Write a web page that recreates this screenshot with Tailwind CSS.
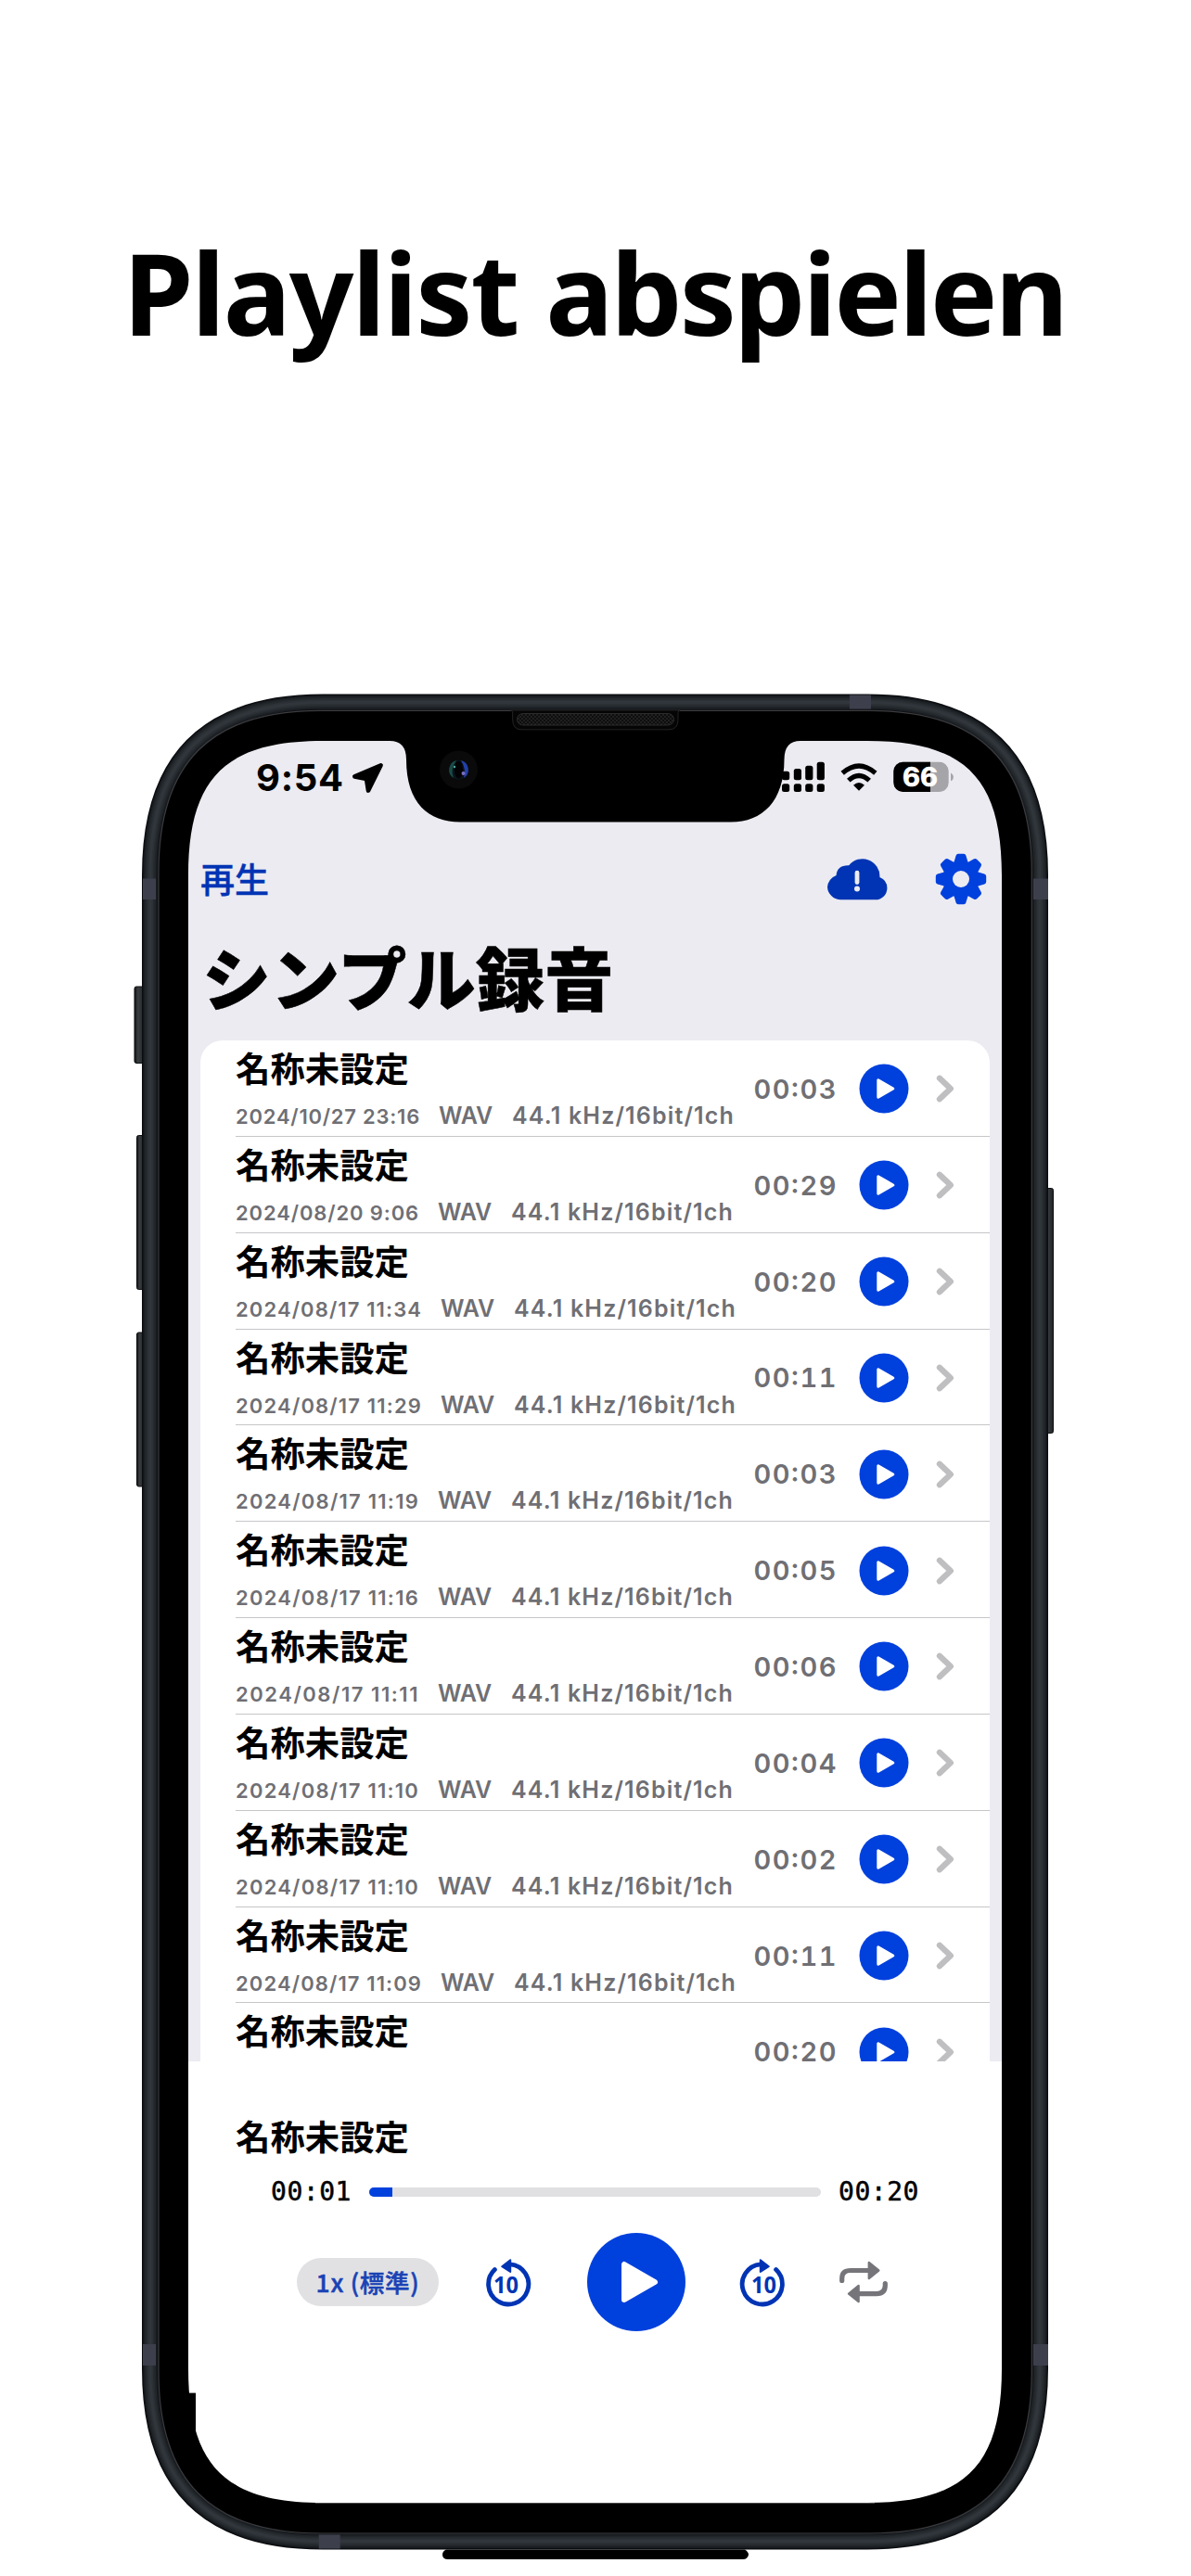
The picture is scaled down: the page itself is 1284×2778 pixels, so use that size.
<!DOCTYPE html>
<html lang="de">
<head>
<meta charset="utf-8">
<title>Playlist abspielen</title>
<script src="https://cdn.jsdelivr.net/npm/@tailwindcss/browser@4"></script>
</head>
<body class="bg-white text-black">
<div class="relative w-[1284px] h-[2778px] overflow-hidden bg-white">
  <header class="h-[799px] pt-[235px] pr-[2px] flex justify-center items-start">
    <h1 class="font-['Noto_Sans',sans-serif] font-bold text-[122px] leading-[160px] tracking-[-2px] whitespace-nowrap">Playlist <span class="tracking-[-2.8px]">abspielen</span></h1>
  </header>

  <main class="ml-[203px] w-[877px] h-[1900px] bg-[#ebebf1] flex flex-col overflow-hidden font-[Inter,'Noto_Sans_CJK_JP',sans-serif]">
    <!-- status bar -->
    <div class="h-[119px] shrink-0 flex items-start pt-[14px] pl-[73px]">
      <span class="w-[94px] font-bold text-[40px] leading-[52px] tracking-[0.7px]">9:54</span>
      <svg class="ml-[8px] mt-[8px] w-[36px] h-[36px] shrink-0" viewBox="378 821 36 36"><path d="M410.6 825.3 L382.3 837.4 L395 840 L397 852.6 Z" fill="#000" stroke="#000" stroke-width="4.6" stroke-linejoin="round"/></svg>
      <svg class="ml-auto mr-[48px] mt-[5px] w-[192px] h-[40px] shrink-0" viewBox="840 818 192 40">
        <g fill="#000">
          <rect x="843" y="831.7" width="8.2" height="9.5" rx="2.5"/><rect x="855.8" y="829" width="8.2" height="12.2" rx="2.5"/><rect x="868.2" y="825.7" width="8.2" height="15.5" rx="2.5"/><rect x="880.7" y="821.8" width="8.2" height="19.4" rx="2.5"/>
          <rect x="843" y="845.3" width="8.2" height="8.8" rx="2.5"/><rect x="855.8" y="845.3" width="8.2" height="8.8" rx="2.5"/><rect x="868.2" y="845.3" width="8.2" height="8.8" rx="2.5"/><rect x="880.7" y="845.3" width="8.2" height="8.8" rx="2.5"/>
          <path d="M926 852.8 l-6 -6 q6 -5.4 12 0 z"/>
        </g>
        <g fill="none" stroke="#000" stroke-width="5.2">
          <path d="M908.2 833.8 Q926 818.2 943.8 833.8"/><path d="M914.8 841.6 Q926 831.2 937.2 841.6"/>
        </g>
        <clipPath id="bat"><rect x="963.3" y="821.8" width="59.4" height="32.2" rx="10"/></clipPath>
        <g clip-path="url(#bat)"><rect x="963" y="821" width="60" height="34" fill="#a5a4a9"/><rect x="963" y="821" width="40" height="34" fill="#000"/></g>
        <path d="M1025 833.5 q3 1.6 3 4.4 q0 2.8 -3 4.4 z" fill="#a5a4a9"/>
        <text x="992" y="848.4" text-anchor="middle" font-family="Inter" font-weight="700" font-size="28" textLength="38" lengthAdjust="spacingAndGlyphs" fill="#fff" stroke="#fff" stroke-width=".7">66</text>
      </svg>
    </div>

    <!-- navigation -->
    <div class="h-[60px] shrink-0 flex items-center pl-[13px] pr-[16px]">
      <span class="pb-[2px] font-['Noto_Sans_CJK_JP'] font-medium text-[37px] leading-[58px] text-[#0034b4] [-webkit-text-stroke:0.4px_#0034b4]">再生</span>
      <svg class="ml-auto w-[66px] h-[46px]" viewBox="891 925 66 46">
        <path d="M907 970.3 a14.6 14.6 0 0 1 -15 -13.6 a14 14 0 0 1 9.6 -12.6 q.8 -11.2 13.6 -10.8 a18.6 18.6 0 0 1 33.2 12.6 a12.6 12.6 0 0 1 8 12 a12.6 12.6 0 0 1 -12.6 12.4 z" fill="#0034b4"/>
        <path d="M924 941.2 V951.6" stroke="#ebebf1" stroke-width="4.8" stroke-linecap="round"/><circle cx="924" cy="958.6" r="3" fill="#ebebf1"/>
      </svg>
      <svg class="ml-[51px] w-[56px] h-[56px]" viewBox="-28 -28 56 56">
        <defs><path id="tooth" d="M-8.2 -16 L-5.4 -25.3 Q-4.8 -27.2 -3 -27.2 H3 Q4.8 -27.2 5.4 -25.3 L8.2 -16 Z"/></defs>
        <g fill="#0040dd"><circle r="19.8"/>
          <use href="#tooth"/><use href="#tooth" transform="rotate(45)"/><use href="#tooth" transform="rotate(90)"/><use href="#tooth" transform="rotate(135)"/><use href="#tooth" transform="rotate(180)"/><use href="#tooth" transform="rotate(225)"/><use href="#tooth" transform="rotate(270)"/><use href="#tooth" transform="rotate(315)"/></g>
        <circle r="9" fill="#ebebf1"/>
      </svg>
    </div>
    <h2 class="h-[144px] shrink-0 pl-[15px] pt-[4px] font-['Noto_Sans_CJK_JP'] font-black text-[74px] leading-[140px] tracking-[0.3px] [-webkit-text-stroke:0.5px_#000] whitespace-nowrap">シンプル録音</h2>

    <!-- recordings -->
    <div id="list" class="h-[1101px] shrink-0 mx-[13px] w-[851px] rounded-t-[24px] bg-white overflow-hidden"></div>

    <!-- player -->
    <section class="flex-1 bg-white flex flex-col">
      <div class="mt-[50px] ml-[51px] font-['Noto_Sans_CJK_JP'] font-bold text-[37.4px] leading-[60px]">名称未設定</div>
      <div class="mt-[11px] h-[40px] ml-[89px] flex items-center font-['DejaVu_Sans_Mono'] text-[28px] leading-[40px] tracking-[0.54px]">
        <span class="w-[87px] [-webkit-text-stroke:0.5px_#000]">00:01</span>
        <div class="ml-[19px] w-[487px] h-[10px] rounded-full bg-[#e0e0e2] overflow-hidden"><div class="w-[25px] h-full bg-[#0040dd]"></div></div>
        <span class="ml-[19px] w-[87px] [-webkit-text-stroke:0.5px_#000]">00:20</span>
      </div>
      <div class="mt-[23px] h-[107px] ml-[117px] flex items-center">
        <div class="w-[153px] h-[52px] shrink-0 rounded-full bg-[#e1e1e4] flex items-center justify-center font-['Noto_Sans_CJK_JP'] font-medium text-[26.5px] leading-[52px] tracking-[0.7px] text-[#1a43b5] [-webkit-text-stroke:0.5px_#1a43b5] whitespace-nowrap">1x (標準)</div>
        <svg class="ml-[46px] w-[54px] h-[60px]" viewBox="-27 -32 54 60">
          <g id="skip"><path d="M4 -21.2 A21.6 21.6 0 1 1 -12.6 -15.4" fill="none" stroke="#0034b4" stroke-width="4.8" stroke-linecap="round"/>
          <path d="M-4.8 -18.8 L4.2 -25.8 V-13 Z" fill="#0034b4" stroke="#0034b4" stroke-width="2" stroke-linejoin="round"/></g>
          <text x="-0.6" y="9.6" text-anchor="middle" font-family="Noto Sans" font-weight="700" font-size="25" textLength="27" lengthAdjust="spacingAndGlyphs" fill="#0034b4">10</text>
        </svg>
        <svg class="ml-[60px] w-[106px] h-[106px]" viewBox="-53 -53 106 106"><circle r="53" fill="#0040dd"/><path d="M-13 -19 V19 L20 0 Z" fill="#fff" stroke="#fff" stroke-width="6" stroke-linejoin="round"/></svg>
        <svg class="ml-[58px] w-[54px] h-[60px]" viewBox="-27 -32 54 60">
          <use href="#skip" transform="scale(-1 1)"/>
          <text x="-0.6" y="9.6" text-anchor="middle" font-family="Noto Sans" font-weight="700" font-size="25" textLength="27" lengthAdjust="spacingAndGlyphs" fill="#0034b4">10</text>
        </svg>
        <svg class="ml-[53px] w-[54px] h-[50px]" viewBox="904 2437 54 50">
          <g fill="none" stroke="#75757a" stroke-width="5.2" stroke-linecap="round"><path d="M907.7 2460.5 V2458 Q907.7 2449.5 917 2449.5 H937"/><path d="M954.3 2463.5 V2465.5 Q954.3 2474.6 945 2474.6 H925"/></g>
          <g fill="#75757a" stroke="#75757a" stroke-width="2.4" stroke-linejoin="round"><path d="M936.8 2441 L947.3 2449.5 L936.8 2458 Z"/><path d="M925.6 2466 L915 2474.6 L925.6 2483 Z"/></g>
        </svg>
      </div>
    </section>
  </main>

  <!-- device frame, lying over the screen -->
  <svg class="absolute left-0 top-0 w-[1284px] h-[2778px]" viewBox="0 0 1284 2778">
    <defs>
      <path id="band" d="M348 757.6 H935 C1060 757.6 1121 818.6 1121 943.6 V2554.5 C1121 2679.5 1060 2740.5 935 2740.5 H348 C223 2740.5 162 2679.5 162 2554.5 V943.6 C162 818.6 223 757.6 348 757.6 Z"/>
      <linearGradient id="bl" x1="0" x2="1" y1="0" y2="0"><stop offset="0" stop-color="#0d0f11"/><stop offset=".3" stop-color="#3a3d40"/><stop offset="1" stop-color="#202326"/></linearGradient>
      <pattern id="mesh" width="4" height="4" patternUnits="userSpaceOnUse"><rect width="4" height="4" fill="#0e0e0e"/><circle cx="1" cy="1" r=".9" fill="#282828"/><circle cx="3" cy="3" r=".9" fill="#282828"/></pattern>
    </defs>
    <g fill="url(#bl)" stroke="#0d0f11" stroke-width="1">
      <rect x="145" y="1064" width="12" height="82.500" rx="2"/><rect x="147.500" y="1224.500" width="9" height="166" rx="2"/><rect x="147.500" y="1437" width="9" height="166" rx="2"/><rect x="1127" y="1281.500" width="8.500" height="264" rx="2"/>
    </g>
    <path fill="#000" fill-rule="evenodd" d="M348 757.6 H935 C1060 757.6 1121 818.6 1121 943.6 V2554.5 C1121 2679.5 1060 2740.5 935 2740.5 H348 C223 2740.5 162 2679.5 162 2554.5 V943.6 C162 818.6 223 757.6 348 757.6 Z
      M348 799 H420 Q438 799 438 819 C438 866 462 886.500 496 886.500 H788 C822 886.500 845.500 864 845.500 819 Q845.500 799 863 799 H935 C1040 799 1080 839 1080 944 V2554 C1080 2659 1040 2699 935 2699 H348 C243 2699 203 2659 203 2554 V944 C203 839 243 799 348 799 Z"/>
    <rect x="200" y="2580.600" width="11" height="62" fill="#000"/>
    <path d="M340 2699.500 H943" stroke="#4a4a4c" stroke-width="1"/>
    <g fill="none">
      <use href="#band" stroke="#0b0d10" stroke-width="18"/><use href="#band" stroke="#191d21" stroke-width="15"/><use href="#band" stroke="#20252a" stroke-width="12"/><use href="#band" stroke="#262b30" stroke-width="9"/><use href="#band" stroke="#2c3136" stroke-width="6"/><use href="#band" stroke="#31363c" stroke-width="3"/>
      <path stroke="#3c3c3f" stroke-width="1.200" d="M346 766.300 H937 C1056 766.300 1112.300 822 1112.300 941 V2557 C1112.300 2676 1056 2732 937 2732 H346 C227 2732 171 2676 171 2557 V941 C171 822 227 766.300 346 766.300 Z"/>
    </g>
    <g fill="#3d3f4c">
      <rect x="154" y="947.500" width="14" height="22.500"/><rect x="1114" y="947.500" width="16" height="22.500"/><rect x="916" y="749.500" width="23" height="15"/><rect x="343.700" y="2733.500" width="23" height="15"/><rect x="154" y="2528" width="14" height="23"/><rect x="1114" y="2528" width="16" height="23"/>
    </g>
    <path d="M550.700 766 q2 0 2 3 V776 Q552.700 786.800 562 786.800 H721 Q731 786.800 731 776 V769 q0 -3 2 -3 z" fill="#050505" stroke="#232323" stroke-width="1"/>
    <rect x="557.500" y="769.500" width="169" height="12.500" rx="6.200" fill="url(#mesh)" stroke="#2c2c2c" stroke-width="1"/>
    <circle cx="494.500" cy="830" r="20.500" fill="#0a0a0b"/>
    <circle cx="494.500" cy="830" r="10.500" fill="#0a141c"/>
    <path d="M492 820 A10.500 10.500 0 0 0 489 839 Q485 830 492 820 Z" fill="#1a4a48"/>
    <path d="M497 820 A10.500 10.500 0 0 1 500 839 Q503 830 497 820 Z" fill="#2340a8"/>
    <ellipse cx="494.500" cy="830" rx="4.500" ry="9.500" fill="#020204"/>
    <circle cx="499.500" cy="834" r="2" fill="#7a6fc0"/><circle cx="490" cy="827" r="1.200" fill="#4fa89a"/>
    <path d="M481 2749.500 H803 Q807 2752 807 2755 Q806 2760 801 2760 H483 Q477 2760 477 2755 Q477 2751 481 2749.500 Z" fill="#000"/>
  </svg>
</div>
<script>
// [date, date width, duration]; the row under the player shows its title only
const rows = [
  ['2024/10/27 23:16', 199, '00:03'], ['2024/08/20 9:06', 198, '00:29'], ['2024/08/17 11:34', 201, '00:20'],
  ['2024/08/17 11:29', 201, '00:11'], ['2024/08/17 11:19', 198, '00:03'], ['2024/08/17 11:16', 198, '00:05'],
  ['2024/08/17 11:11', 198, '00:06'], ['2024/08/17 11:10', 198, '00:04'], ['2024/08/17 11:10', 198, '00:02'],
  ['2024/08/17 11:09', 201, '00:11'], ['', 0, '00:20']
];
// letter spacing that brings a label to the given width
const pen = document.createElement('canvas').getContext('2d');
const track = (text, size, width) => {
  pen.font = `560 ${size}px Inter`;
  return ((width - pen.measureText(text).width) / text.length).toFixed(3) + 'px';
};
document.getElementById('list').innerHTML = rows.map(([date, w, time]) => `
  <div class="ml-[38px] h-[103.85px] flex items-center border-b border-[#c6c6c8]">
    <div class="w-[558px] h-full flex flex-col">
      <div class="h-[60px] shrink-0 font-['Noto_Sans_CJK_JP'] font-bold text-[37.4px] leading-[58px]">名称未設定</div>
      ${date && `<div class="h-[42px] flex items-baseline font-[560] text-[25px] leading-[43px] text-[#6f6f74] whitespace-nowrap">
        <span class="text-[22px]" style="letter-spacing:${track(date, 22, w)}">${date}</span>
        <span class="ml-[20px]" style="letter-spacing:${track('WAV', 25, 58)}">WAV</span>
        <span class="ml-[21px]" style="letter-spacing:${track('44.1 kHz/16bit/1ch', 25, 240)}">44.1 kHz/16bit/1ch</span>
      </div>`}
    </div>
    <svg class="mt-[3px] w-[92px] h-[40px] shrink-0 overflow-visible tabular-nums" viewBox="0 0 92 40"><text x="0.500" y="29.800" font-family="Inter" font-weight="560" font-size="29" textLength="89" fill="#6f6f74">${time}</text></svg>
    <svg class="ml-[22px] mt-[2px] w-[54px] h-[54px] shrink-0" viewBox="-27 -27 54 54"><circle r="26.500" fill="#0040dd"/><path d="M-6.200 -9.300 V9.300 L9.800 0 Z" fill="#fff" stroke="#fff" stroke-width="3" stroke-linejoin="round"/></svg>
    <svg class="ml-[29px] mt-[2px] w-[20px] h-[32px] shrink-0" viewBox="0 0 20 32"><path d="M4 4.800 L15.800 16 L4 27.200" fill="none" stroke="#bfbfc1" stroke-width="6.400" stroke-linecap="round" stroke-linejoin="round"/></svg>
  </div>`).join('');
</script>
</body>
</html>
